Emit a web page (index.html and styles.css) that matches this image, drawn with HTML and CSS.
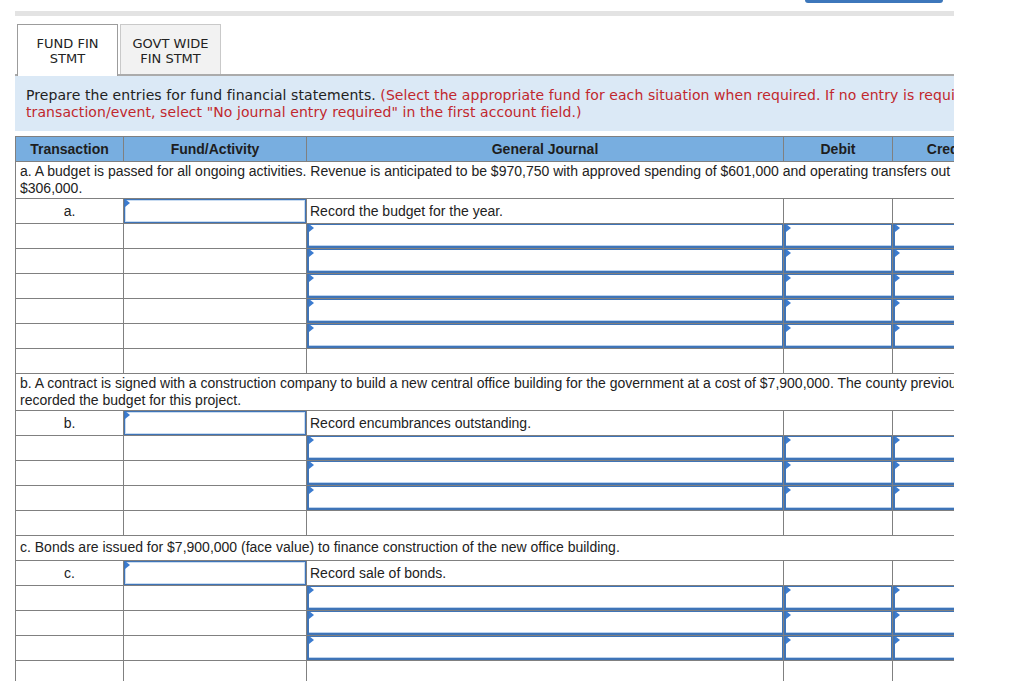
FILE: index.html
```html
<!DOCTYPE html>
<html lang="en">
<head>
<meta charset="utf-8">
<title>Fund Financial Statements</title>
<link rel="stylesheet" href="styles.css">
</head>
<body>
<div class="sheet">
  <div class="top"><div class="top-btn"></div></div>
  <div class="inner">
    <div class="bar"></div>
    <div class="tabs">
      <div class="tab active">FUND FIN<br>STMT</div>
      <div class="tab">GOVT WIDE<br>FIN STMT</div>
    </div>
    <div class="instructions">Prepare the entries for fund financial statements. <span class="req">(Select the appropriate fund for each situation when required. If no entry is required for a transaction/event, select "No journal entry required" in the first account field.)</span></div>

    <div class="grid">
      <div class="row head">
        <div class="c c1">Transaction</div>
        <div class="c c2">Fund/Activity</div>
        <div class="c c3">General Journal</div>
        <div class="c c4">Debit</div>
        <div class="c c5">Credit</div>
      </div>

      <div class="row desc"><div class="c full">a. A budget is passed for all ongoing activities. Revenue is anticipated to be $970,750 with approved spending of $601,000 and operating transfers out of $306,000.</div></div>
      <div class="row">
        <div class="c c1 label">a.</div>
        <div class="c c2"><div class="fund-input"></div></div>
        <div class="c c3 note">Record the budget for the year.</div>
        <div class="c c4"></div>
        <div class="c c5"></div>
      </div>
      <div class="row"><div class="c c1"></div><div class="c c2"></div><div class="c c3"><div class="entry"></div></div><div class="c c4"><div class="entry"></div></div><div class="c c5"><div class="entry"></div></div></div>
      <div class="row"><div class="c c1"></div><div class="c c2"></div><div class="c c3"><div class="entry"></div></div><div class="c c4"><div class="entry"></div></div><div class="c c5"><div class="entry"></div></div></div>
      <div class="row"><div class="c c1"></div><div class="c c2"></div><div class="c c3"><div class="entry"></div></div><div class="c c4"><div class="entry"></div></div><div class="c c5"><div class="entry"></div></div></div>
      <div class="row"><div class="c c1"></div><div class="c c2"></div><div class="c c3"><div class="entry"></div></div><div class="c c4"><div class="entry"></div></div><div class="c c5"><div class="entry"></div></div></div>
      <div class="row"><div class="c c1"></div><div class="c c2"></div><div class="c c3"><div class="entry"></div></div><div class="c c4"><div class="entry"></div></div><div class="c c5"><div class="entry"></div></div></div>
      <div class="row"><div class="c c1"></div><div class="c c2"></div><div class="c c3"></div><div class="c c4"></div><div class="c c5"></div></div>

      <div class="row desc"><div class="c full">b. A contract is signed with a construction company to build a new central office building for the government at a cost of $7,900,000. The county previously recorded the budget for this project.</div></div>
      <div class="row">
        <div class="c c1 label">b.</div>
        <div class="c c2"><div class="fund-input"></div></div>
        <div class="c c3 note">Record encumbrances outstanding.</div>
        <div class="c c4"></div>
        <div class="c c5"></div>
      </div>
      <div class="row"><div class="c c1"></div><div class="c c2"></div><div class="c c3"><div class="entry"></div></div><div class="c c4"><div class="entry"></div></div><div class="c c5"><div class="entry"></div></div></div>
      <div class="row"><div class="c c1"></div><div class="c c2"></div><div class="c c3"><div class="entry"></div></div><div class="c c4"><div class="entry"></div></div><div class="c c5"><div class="entry"></div></div></div>
      <div class="row"><div class="c c1"></div><div class="c c2"></div><div class="c c3"><div class="entry"></div></div><div class="c c4"><div class="entry"></div></div><div class="c c5"><div class="entry"></div></div></div>
      <div class="row"><div class="c c1"></div><div class="c c2"></div><div class="c c3"></div><div class="c c4"></div><div class="c c5"></div></div>

      <div class="row desc single"><div class="c full">c. Bonds are issued for $7,900,000 (face value) to finance construction of the new office building.</div></div>
      <div class="row">
        <div class="c c1 label">c.</div>
        <div class="c c2"><div class="fund-input"></div></div>
        <div class="c c3 note">Record sale of bonds.</div>
        <div class="c c4"></div>
        <div class="c c5"></div>
      </div>
      <div class="row"><div class="c c1"></div><div class="c c2"></div><div class="c c3"><div class="entry"></div></div><div class="c c4"><div class="entry"></div></div><div class="c c5"><div class="entry"></div></div></div>
      <div class="row"><div class="c c1"></div><div class="c c2"></div><div class="c c3"><div class="entry"></div></div><div class="c c4"><div class="entry"></div></div><div class="c c5"><div class="entry"></div></div></div>
      <div class="row"><div class="c c1"></div><div class="c c2"></div><div class="c c3"><div class="entry"></div></div><div class="c c4"><div class="entry"></div></div><div class="c c5"><div class="entry"></div></div></div>
      <div class="row"><div class="c c1"></div><div class="c c2"></div><div class="c c3"></div><div class="c c4"></div><div class="c c5"></div></div>
    </div>
  </div>
</div>
</body>
</html>
```
FILE: styles.css
```css
html, body {
  margin: 0;
  padding: 0;
  background: #ffffff;
}

.sheet {
  margin-left: 15px;
  width: 939px;
  overflow: hidden;
}

.top {
  display: flex;
  justify-content: flex-end;
  padding-right: 11px;
}

.top-btn {
  width: 138px;
  height: 3px;
  background: #3d77bb;
  border-radius: 0 0 4px 4px;
}

.inner {
  width: 1050px;
}

.bar {
  margin-top: 8px;
  height: 5px;
  width: 939px;
  background: #e3e3e3;
}

.tabs {
  margin-top: 8px;
  display: flex;
  gap: 2px;
  padding-left: 2px;
  height: 50px;
}

.tab {
  box-sizing: border-box;
  width: 101px;
  height: 50px;
  padding-top: 11px;
  text-align: center;
  font-family: "DejaVu Sans", Verdana, sans-serif;
  font-size: 13px;
  line-height: 15px;
  color: #222222;
  background: #f2f2f2;
  border: 1px solid #c9c9c9;
  border-bottom: none;
}

.tab.active {
  background: #ffffff;
  border-color: #9c9c9c;
  height: 52px;
  position: relative;
  z-index: 1;
}

.instructions {
  border-top: 2px solid #ababab;
  background: #dbe9f6;
  padding: 11px 11px 10px;
  font-family: "DejaVu Sans", Verdana, sans-serif;
  font-size: 14px;
  line-height: 17px;
  letter-spacing: 0.08px;
  color: #222222;
}

.req {
  color: #c1272d;
}

.grid {
  margin-top: 5px;
  width: 987px;
  border-top: 1px solid #808080;
  border-left: 1px solid #808080;
  font-family: "Liberation Sans", Arial, sans-serif;
  font-size: 14px;
  color: #222222;
}

.row {
  display: flex;
  box-sizing: border-box;
  height: 25px;
  border-bottom: 1px solid #808080;
}

.row.desc {
  height: 37px;
}

.row.desc.single {
  height: 25px;
}

.c {
  box-sizing: border-box;
  border-right: 1px solid #808080;
  height: 100%;
  flex: none;
}

.c1 { width: 108px; }
.c2 { width: 183px; }
.c3 { width: 477px; }
.c4 { width: 109px; }
.c5 { width: 109px; }

.full {
  width: 986px;
  padding: 1px 4px 0;
  line-height: 17px;
}

.single .full {
  line-height: 23px;
  padding-top: 0;
}

.head {
  background: #78aee0;
}

.head .c {
  text-align: center;
  font-weight: bold;
  line-height: 24px;
  color: #1e1e1e;
}

.label {
  text-align: center;
  line-height: 24px;
}

.note {
  padding-left: 3px;
  line-height: 24px;
}

.fund-input {
  position: relative;
  box-sizing: border-box;
  height: 100%;
  border: 1px solid #3f74b7;
  box-shadow: inset 0 0 0 1px #c9dcf1;
  background: #ffffff;
}

.entry {
  position: relative;
  box-sizing: border-box;
  height: 100%;
  border-top: 1px solid #3f74b7;
  border-left: 2px solid #3f74b7;
  border-right: 1px solid #3f74b7;
  border-bottom: 2px solid #3f74b7;
  box-shadow: inset 0 -1px 0 #bcd2ec;
  background: #ffffff;
}

.fund-input::before,
.entry::before {
  content: "";
  position: absolute;
  top: -1px;
  left: 0;
  width: 0;
  height: 0;
  border-left: 5px solid #3b7bcf;
  border-top: 4px solid transparent;
  border-bottom: 4px solid transparent;
}
```
